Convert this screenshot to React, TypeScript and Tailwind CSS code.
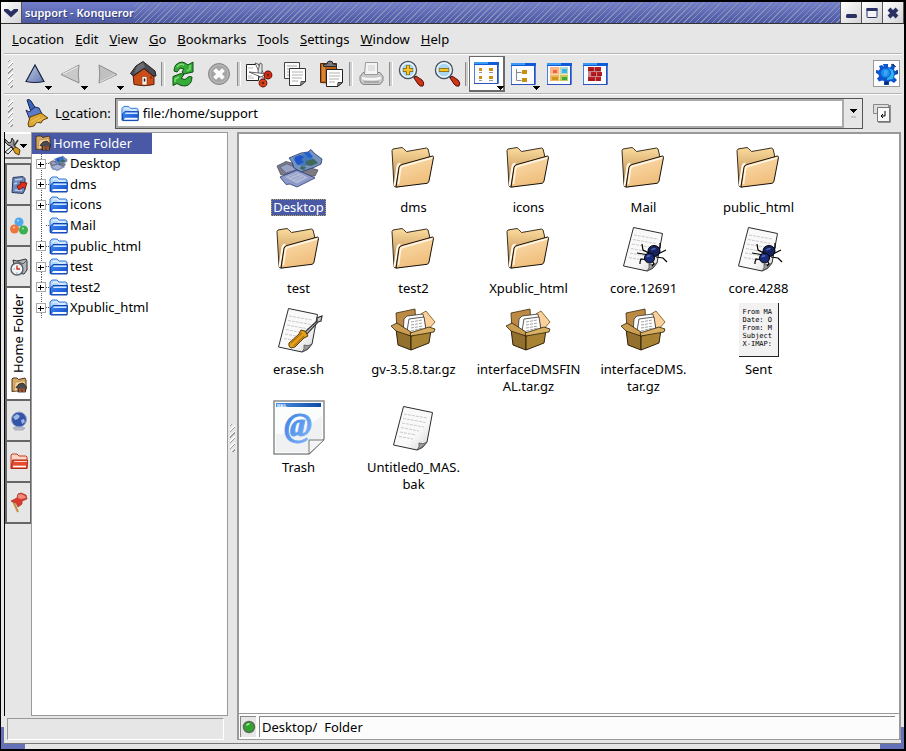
import { ReactNode, useState } from 'react';

interface iconProps {
    className?: string;
}

interface fileProps {
    icon: ReactNode;
    lines: string[];
    selected?: boolean;
    onSelect: () => void;
}

// ^ ---------------------------- small icons --------------------------------------

function BlueFolder({ className = 'w-[19px] h-[17px]' }: iconProps) {
    return (
        <svg viewBox="0 0 19 17" className={className} aria-hidden="true">
            <defs>
                <linearGradient id="blueFront" x1="0" y1="0" x2="1" y2="1">
                    <stop offset="0" stopColor="#3f8cf4" />
                    <stop offset="1" stopColor="#1349c8" />
                </linearGradient>
            </defs>
            <path d="M1 15.500V3l2-2h5l2 2h6.500l1.500 1v11.500z" fill="#b4d8fc" stroke="#3676d8" />
            <path d="M4 4.500L5 3h3l2 2h6" fill="none" stroke="#f2f9ff" />
            <path d="M1.500 15.500V9L4 6.500h14.500l-.500 9.500H2z" fill="url(#blueFront)" stroke="#1246ae" />
            <path d="M5 7.500h12.500v1.500H4z" fill="#cfe6ff" />
            <path d="M4 13h13.500v2H3z" fill="#f4f9ff" />
        </svg>
    );
}

function HomeFolder() {
    return (
        <svg viewBox="0 0 16 16" className="w-4 h-4 shrink-0" aria-hidden="true">
            <path d="M1 14.500V2l1-1h4l1.500 1.500L14 1l1 2v10z" fill="#d9a966" stroke="#4a3318" />
            <path d="M3 14L4 5l10-1.500v9z" fill="#f2cf95" stroke="#b58a4c" strokeWidth=".8" />
            <path d="M5 10.500L8 7l4-1 3.500 4v1l-1 .500v3.500H7v-4z" fill="#4b4b50" stroke="#222" strokeWidth=".8" />
            <path d="M8 11.500h6V15H8z" fill="#b5511f" />
            <path d="M10 12.500h2V15h-2z" fill="#4b4b50" />
        </svg>
    );
}

function DesktopShapes() {
    return (
        <>
            <path d="M2 20l9-4.500L43 24l-3 6-13 1-14-3-7 1z" fill="#7e7c82" stroke="#4a4e62" strokeWidth=".8" />
            <path d="M5 21l7-3 12 5-13 4z" fill="#97a3c4" stroke="#5b648c" strokeWidth=".8" />
            <path d="M5 31l17-7 5 2 13 6-18 9-7-3-4 .500z" fill="#8c9bc9" stroke="#303b6d" strokeWidth=".8" />
            <path d="M10 31l12-5 11 5.500-11 6z" fill="#b2bad6" />
            <path d="M14 31l9-3.500M17 33l9-3.500M20 34.500l9-3.500" stroke="#8d98c2" strokeWidth=".8" />
            <path d="M14 12l12-5 7-1 3-2.500 3 3.500 8 6-1 5-6 3-14 5-7-4-2-6z" fill="#7593bf" stroke="#27376b" strokeWidth=".8" />
            <path d="M18 12l13-5 5 2 3 6-9 5-8-1z" fill="#4478b8" />
            <path d="M20 11l5-2 4 2-3 3 3 2-6 3-3-4z" fill="#1f55cc" />
            <path d="M31 15l8-2 4 4-7 3-5-1zM26 20l5 1-2 3-4-1z" fill="#41675c" />
            <path d="M29 7l5-1 4 5-4 1z" fill="#1f5fd0" />
        </>
    );
}

function Caret({ className = '' }: iconProps) {
    return (
        <svg viewBox="0 0 7 4" className={`w-[7px] h-1 ${className}`} shapeRendering="crispEdges" aria-hidden="true">
            <path d="M0 0h2v0h3v0h2v1h-1v1h-1v1h-1v1h-1v-1h-1v-1h-1v-1h-1z" fill="#000" />
        </svg>
    );
}

// ^ ---------------------------- toolbar icons --------------------------------------

const UpIcon = () => (
    <svg viewBox="0 0 32 32" className="w-8 h-8" aria-hidden="true">
        <defs>
            <linearGradient id="up" x1="0" y1="0" x2="1" y2="1">
                <stop offset="0" stopColor="#c3cee8" />
                <stop offset="1" stopColor="#6076ae" />
            </linearGradient>
        </defs>
        <path d="M16 7L7 23.500q9 2 18 0z" fill="url(#up)" stroke="#15203c" strokeWidth="1.200" />
    </svg>
);

const BackIcon = () => (
    <svg viewBox="0 0 32 32" className="w-8 h-8" aria-hidden="true">
        <path d="M6 16.500L24 7q-1.500 9 0 18z" fill="#c9c9c9" stroke="#8d8d8d" />
        <path d="M8 16l15-7.500" stroke="#efefef" />
    </svg>
);

const ForwardIcon = () => (
    <svg viewBox="0 0 32 32" className="w-8 h-8" aria-hidden="true">
        <path d="M26 16.500L8 7q1.500 9 0 18z" fill="#c0c0c0" stroke="#8d8d8d" />
        <path d="M9 24l15-7.500" stroke="#dedede" />
    </svg>
);

const HomeIcon = () => (
    <svg viewBox="0 0 32 32" className="w-8 h-8" aria-hidden="true">
        <path d="M6 16L17 8l10 7v11.500q-10 2.500-20 0z" fill="#cb4c17" stroke="#5a1e08" />
        <path d="M3.500 15.500L9 8l7-4.500L28 13l1 5h-3l-9-7.500L6.500 18z" fill="#4a4a4f" stroke="#1c1c20" />
        <path d="M10 8l6-3.500 2 4.500L7 16z" fill="#6c6c72" />
        <path d="M15 18.500h5V27h-5z" fill="#f6f1e8" stroke="#8a3a16" strokeWidth=".6" />
        <path d="M17.500 20.500v3" stroke="#111" strokeWidth="1.400" />
        <path d="M23 18.500h2v2h-2z" fill="#8d2c08" />
    </svg>
);

const ReloadIcon = () => (
    <svg viewBox="0 0 32 32" className="w-8 h-8" aria-hidden="true">
        <path d="M7 13q0-8 8-9l3 1 3 2 5-3v10l-9 2-2-2 2-3-4-1-3 4z" fill="#35ac36" stroke="#0d4d14" />
        <path d="M25 19q0 8-7 9l-4-.500-4-2-4 2v-9l8-3 3 1-3 4 4 1 4-3z" fill="#35ac36" stroke="#0d4d14" />
        <path d="M10 9q3-4 7-2M23 7v4l-3 2M8 24v-3l4-2" fill="none" stroke="#7fdc74" strokeWidth="1.500" />
    </svg>
);

const StopIcon = () => (
    <svg viewBox="0 0 32 32" className="w-8 h-8" aria-hidden="true">
        <circle cx="16" cy="16" r="10.500" fill="#a6a6a6" stroke="#868686" />
        <circle cx="16" cy="16" r="9" fill="none" stroke="#bcbcbc" />
        <path d="M13 13l6 6M19 13l-6 6" stroke="#fafafa" strokeWidth="4" strokeLinecap="square" />
    </svg>
);

const CutIcon = () => (
    <svg viewBox="0 0 32 32" className="w-8 h-8" aria-hidden="true">
        <path d="M3.500 6.500h12v16h-12z" fill="#fff" stroke="#222" />
        <path d="M5 10h5M5 18h4M5 20h6" stroke="#bbb" />
        <path d="M12 5l3 1 6 10 1 5-4-3z" fill="#f4f4f4" stroke="#444" strokeWidth=".8" />
        <path d="M17 5l2 1v8l-3 6-1-7z" fill="#e4e4e4" stroke="#444" strokeWidth=".8" />
        <path d="M6 14l10 1 7 1-5 3z" fill="#fff" stroke="#444" strokeWidth=".8" />
        <circle cx="25" cy="17" r="2.400" fill="#e6e6e6" stroke="#5c0c05" strokeWidth="4" />
        <circle cx="25" cy="17" r="2.400" fill="none" stroke="#d22c12" strokeWidth="2.400" />
        <circle cx="20" cy="25" r="2.400" fill="#e6b020" stroke="#5c0c05" strokeWidth="4" />
        <circle cx="20" cy="25" r="2.400" fill="none" stroke="#d8401a" strokeWidth="2.400" />
    </svg>
);

const CopyIcon = () => (
    <svg viewBox="0 0 32 32" className="w-8 h-8" aria-hidden="true">
        <path d="M5.500 4.500h15v16h-15z" fill="#fafafa" stroke="#444" />
        <path d="M8 8h10M8 11h10M8 14h4M8 17h4" stroke="#a4a4a4" />
        <path d="M10.500 10.500h16v13l-5 4h-11z" fill="#fff" stroke="#333" />
        <path d="M13 14h11M13 17h11M13 20h10M13 23h6" stroke="#b0b0b0" />
        <path d="M26.500 23.500l-5 4 .500-4z" fill="#999" stroke="#333" strokeWidth=".8" />
    </svg>
);

const PasteIcon = () => (
    <svg viewBox="0 0 32 32" className="w-8 h-8" aria-hidden="true">
        <path d="M5.500 5.500h16v20l-16-1z" fill="#b9601a" stroke="#542505" />
        <path d="M7 7h3v16H7z" fill="#d98536" />
        <path d="M8.500 8.500V6.500L12 6q0-3 3-3t3 3l3.500.500v2z" fill="#77777b" stroke="#29292c" />
        <path d="M11.500 11.500h16v13l-5 4h-11z" fill="#fff" stroke="#222" />
        <path d="M14 15h11M14 18h11M14 21h10M14 24h6" stroke="#b0b0b0" />
        <path d="M27.500 24.500l-5 4 .500-4z" fill="#888" stroke="#222" strokeWidth=".8" />
    </svg>
);

const PrintIcon = () => (
    <svg viewBox="0 0 32 32" className="w-8 h-8" aria-hidden="true">
        <path d="M8 14.500h17l3 4v4q-2 4-4 4H9q-3 0-4-4v-4z" fill="#c9c9c9" stroke="#858585" />
        <path d="M10.500 4.500h12v12h-13z" fill="#f4f4f4" stroke="#9a9a9a" />
        <path d="M13 7h7v6h-7z" fill="#e2e2e2" />
        <path d="M7 20q9 2.500 19 0" fill="none" stroke="#f6f6f6" strokeWidth="2.500" />
        <path d="M9 24h15" stroke="#9c9c9c" strokeWidth="1.500" />
    </svg>
);

const ZoomShapes = ({ plus }: { plus?: boolean }) => (
    <svg viewBox="0 0 32 32" className="w-8 h-8" aria-hidden="true">
        <path d="M18 18l4 3" stroke="#555" strokeWidth="2.500" />
        <path d="M19 20l2-2 6 4q3 3 1 6-3 1-5-2z" fill="#cf3318" stroke="#531006" />
        <circle cx="13" cy="12" r="8.500" fill="#a9d6f2" stroke="#46525e" strokeWidth="1.500" />
        <circle cx="13" cy="12" r="7" fill="none" stroke="#eef5fa" strokeWidth="1.400" />
        <path d="M8 12h10" stroke="#866407" strokeWidth="4" />
        {plus && <path d="M13 7v10" stroke="#866407" strokeWidth="4" />}
        <path d="M8.500 12h9" stroke="#f7c32c" strokeWidth="2.400" />
        {plus && <path d="M13 7.500v9" stroke="#f7c32c" strokeWidth="2.400" />}
    </svg>
);

const WindowView = ({ children }: { children: ReactNode }) => (
    <svg viewBox="0 0 25 22" className="w-[25px] h-[22px]" aria-hidden="true">
        <path d="M.5 .5h24v21H.5z" fill="#fafcff" stroke="#4a80dc" />
        <path d="M0 0h25v3H0z" fill="#0f5bd8" />
        <path d="M0 0h14v2H0z" fill="#3b9af4" />
        <path d="M24 3v19H0v-1h23V3z" fill="#2c52b8" />
        {children}
    </svg>
);

const IconsView = () => (
    <WindowView>
        <path d="M5 6h3v3H5zM15 6h4v3h-4zM5 14h3v3H5zM15 14h4v3h-4z" fill="#c98f14" />
        <path d="M5 10.500h3M15 10.500h4M5 18.500h3M15 18.500h4" stroke="#999" />
    </WindowView>
);

const TreeView = () => (
    <WindowView>
        <path d="M5.500 6v11.500h5M5.500 9.500h5" stroke="#888" fill="none" />
        <path d="M11 7h5v4h-5zM11 15h5v4h-5z" fill="#c98f14" />
    </WindowView>
);

const ColorView = () => (
    <WindowView>
        <path d="M3 4h9v7H3z" fill="#f6b48c" />
        <path d="M6 7h4v3H6z" fill="#f4603a" />
        <path d="M13 4h8v7h-8z" fill="#b4d8c8" />
        <path d="M15 6h5v4h-5z" fill="#38b4f0" />
        <path d="M3 12h9v6H3z" fill="#f0b464" />
        <path d="M5 14h6v3H5z" fill="#cc9a1a" />
        <path d="M13 12h8v6h-8z" fill="#c0cc60" />
        <path d="M15 14h5v3h-5z" fill="#3caa34" />
        <path d="M12.500 4v14M3 11.500h18" stroke="#fae0a8" />
    </WindowView>
);

const BrickView = () => (
    <WindowView>
        <path d="M5 4h13v14H5z" fill="#c4868a" />
        <path d="M5 4h6v4H5zM12 4h6v4h-6zM8 9h5v4H8zM14 9h5v4h-5zM5 14h7v4H5zM13 14h5v4h-5z" fill="#bc1c20" />
        <path d="M6 7h4M13 7h4M9 12h4M15 12h3M6 17h5M14 17h3" stroke="#84141a" />
    </WindowView>
);

const GearIcon = () => (
    <svg viewBox="0 0 24 24" className="w-6 h-6" aria-hidden="true">
        <path d="M8 2h5v3l2 .500 2-2.500 3 1-1 4 1 1 3-1v4l-3 1-1 2 3 3-3 3-3-2-2 1v3H9v-4l-2-.500-3 1-2-3 2-2-.500-2L1 11V8l3 .500 1-2L4 4l3-1 2 2z" fill="#0d55cf" />
        <path d="M13 6l5 2 1 4-1 5-6 1z" fill="#2eb6f2" />
        <circle cx="10.500" cy="11" r="5" fill="#1d8df0" stroke="#0f58c8" />
        <path d="M9 8l4 1-1 4-3 1z" fill="#3fa6f6" />
        <path d="M16 3l2-1 3 3M22 8v4M10 20h3v2h-3z" stroke="#072a66" fill="#072a66" strokeWidth=".8" />
    </svg>
);

const BroomIcon = () => (
    <svg viewBox="0 0 24 30" className="w-6 h-[30px]" aria-hidden="true">
        <path d="M2 2q2-1.500 4 1l5 8-5 3z" fill="#3b64c0" stroke="#14234e" />
        <path d="M1 12l3 2 6-5 4 1 3 6-12 6z" fill="#5a7cc8" stroke="#1a2a5a" />
        <path d="M5 19l11-4 7 5-5 2-2 3-4-1-3 4-5 1-1-3z" fill="#dca632" stroke="#5d410c" />
        <path d="M6 24l9-5M9 25l10-5" stroke="#f0c860" />
    </svg>
);

// ^ ---------------------------- sidebar icons --------------------------------------

const ToolsIcon = () => (
    <svg viewBox="0 0 20 20" className="w-5 h-5" aria-hidden="true">
        <path d="M0 3l4 4 2-1 1-4 2 3v4l5 6-2 2-6-7-3-1-3-3z" fill="#999" stroke="#222" />
        <path d="M0 16l6-5 2 2-5 5z" fill="#e8e8e8" stroke="#222" />
        <path d="M8 13l3-2 4 3-1 5-4-2z" fill="#d89c1c" stroke="#5d410c" />
        <path d="M9 10l4-6" stroke="#333" strokeWidth="1.500" />
    </svg>
);

const BookmarkIcon = () => (
    <svg viewBox="0 0 18 18" className="w-[18px] h-[18px]" aria-hidden="true">
        <path d="M3 1.500l10-1 2 2v11l-2 4-11-1z" fill="#6c88ba" stroke="#26375e" />
        <path d="M5 4l7-1M4 8l3-1M5 14l7 .500" stroke="#b9cbe8" strokeWidth="1.500" />
        <path d="M7 10l4-2-1-2 7 1-2 6-2-2-4 3z" fill="#e0301c" stroke="#6c0f08" strokeWidth=".8" />
    </svg>
);

const BallsIcon = () => (
    <svg viewBox="0 0 18 18" className="w-[18px] h-[18px]" aria-hidden="true">
        <circle cx="9" cy="5" r="4.500" fill="#4ea8ee" />
        <circle cx="4.500" cy="12" r="4.500" fill="#ee7440" />
        <circle cx="13.500" cy="13" r="4.500" fill="#38b050" />
        <path d="M7 3.500h2M3 10.500h2M12 11.500h2" stroke="#fff" strokeWidth="1.500" opacity=".6" />
    </svg>
);

const ClockIcon = () => (
    <svg viewBox="0 0 18 18" className="w-[18px] h-[18px]" aria-hidden="true">
        <path d="M3 2l4 1 9-2 1 2v9l-3 4-8-1z" fill="#b0b6ba" stroke="#333" />
        <path d="M7 3l6 3 4-4" fill="none" stroke="#555" />
        <circle cx="7" cy="11" r="6" fill="#f2f4f6" stroke="#565c62" strokeWidth="1.400" />
        <path d="M7 7.500V11h3" fill="none" stroke="#d0321c" strokeWidth="1.400" />
        <path d="M3.500 11h1M7 14.500v1" stroke="#3e6fc0" />
    </svg>
);

const GlobeIcon = () => (
    <svg viewBox="0 0 18 20" className="w-[18px] h-5" aria-hidden="true">
        <path d="M3 17q6-3 12 0l-2 2H5z" fill="#b8bfcc" stroke="#9ca3b0" strokeWidth=".8" />
        <circle cx="9" cy="8.500" r="7.500" fill="#3454a8" stroke="#9aa6c2" />
        <path d="M3 6l4-3 3 2-2 3-3 1zM11 9l3-1 1 3-3 2zM11 3l3 2" fill="#9fb8e4" />
    </svg>
);

const RedFolder = () => (
    <svg viewBox="0 0 18 17" className="w-[18px] h-[17px]" aria-hidden="true">
        <path d="M1 15.500V2l1-1h5l2 2h7l1 1v11.500z" fill="#fad4c4" stroke="#c83c20" />
        <path d="M1 15.500L2.500 7h15l-.500 8.500z" fill="#e84a2c" stroke="#b0281a" />
        <path d="M4 8.500h13" stroke="#fbd8cc" />
        <path d="M3 13.500h13" stroke="#fff" strokeWidth="1.600" />
    </svg>
);

const FlagIcon = () => (
    <svg viewBox="0 0 18 22" className="w-[18px] h-[22px]" aria-hidden="true">
        <path d="M3 9l5 11" stroke="#c2903a" strokeWidth="2" />
        <path d="M8 2l3-1 5 2 1 4-5 2v3l-4 3-2-4-5-2 4-2 2-1z" fill="#dc382c" stroke="#a8382c" strokeWidth=".8" />
        <path d="M8 3l3-1 4 2 1 2-5 1-3-1z" fill="#ee8c80" />
    </svg>
);

// ^ ---------------------------- big file icons --------------------------------------

const DesktopIcon = () => (
    <svg viewBox="0 0 48 46" className="w-12 h-[46px]" aria-hidden="true">
        <DesktopShapes />
    </svg>
);

const FolderIcon = () => (
    <svg viewBox="2 1 48 48" className="w-12 h-12" aria-hidden="true">
        <defs>
            <linearGradient id="fback" x1="0" y1="0" x2="0" y2="1">
                <stop offset="0" stopColor="#fbdc9e" />
                <stop offset=".5" stopColor="#d8ac70" />
                <stop offset="1" stopColor="#8b6a43" />
            </linearGradient>
            <linearGradient id="ffront" x1="0" y1="0" x2=".4" y2="1">
                <stop offset="0" stopColor="#fddfb0" />
                <stop offset="1" stopColor="#efbe7c" />
            </linearGradient>
        </defs>
        <path d="M4 6.500l1-1.500 9-1.500 1.500 1 3 3 20-3.500 1.500 1 1.500 6-3 27-31 5-1.500-1z" fill="url(#fback)" stroke="#3a2f20" />
        <path d="M6.500 42l3-20q.500-2 3-2.500" fill="none" stroke="#fff8ec" strokeWidth="2" />
        <path d="M8 43l3-19.500q.500-2.500 3-3l30.500-8.500q1 0 1 1.500L41 37q-.500 2-2 2.300L9 43z" fill="url(#ffront)" stroke="#17110a" />
        <path d="M10.500 40l2-15q.500-2.300 2.500-2.800L44 14" fill="none" stroke="#fff8ec" strokeWidth="1.500" />
    </svg>
);

const Sheet = ({ children }: { children?: ReactNode }) => (
    <svg viewBox="0 2 48 48" className="w-12 h-12 overflow-visible" aria-hidden="true">
        <defs>
            <linearGradient id="sheet" x1="0" y1="0" x2="1" y2="1">
                <stop offset=".6" stopColor="#f9f9f9" />
                <stop offset="1" stopColor="#d2d2d2" />
            </linearGradient>
        </defs>
        <path d="M13.500 3.500l29 6L37 39q-4 7-10 8L3.500 42z" fill="url(#sheet)" stroke="#2c2c2c" />
        <path d="M14 11l23 4M13 15.500l23 4M12 20l22 4M11 24.500l18 3.500M10 29l16 3M9 33.500l14 2.500" stroke="#cacaca" strokeDasharray="3 1" />
        <path d="M27 47q3-3 2-7 4 2 8-1-4 6-10 8z" fill="#9a9a9a" stroke="#444" strokeWidth=".7" />
        {children}
    </svg>
);

const CoreIcon = () => (
    <Sheet>
        <path d="M29 31l-12-2M28 36l-7-1-1 3v2M31 30l-8-4-1-6M38 25l2-1v-5M38 30l4-2 4-2M36 33l7 1 4 4M32 36l2 4-2 2" fill="none" stroke="#000" strokeWidth="1.200" />
        <ellipse cx="34" cy="27" rx="6" ry="5.500" fill="#16235e" stroke="#000" />
        <circle cx="29.500" cy="34" r="5" fill="#1a2b78" stroke="#000" />
        <path d="M31.500 26q2-2 4-1M27 33q1-1.500 3-1" fill="none" stroke="#5068c0" strokeWidth="1.500" />
    </Sheet>
);

const ScriptIcon = () => (
    <Sheet>
        <path d="M30 27l12-11v-3l5-2-1 5-3 1-11 12z" fill="#c8c8c8" stroke="#333" strokeWidth="1.200" />
        <path d="M14 38l10-9 2-4 4 1 3 5-4 2-9 9-4 1q-3-1-2-5z" fill="#e2a01c" stroke="#5a3a06" />
        <path d="M16 38l11-10M19 41l10-10" stroke="#b8780f" strokeWidth="1.500" />
    </Sheet>
);

const ArchiveIcon = () => (
    <svg viewBox="0 0 48 48" className="w-12 h-12" aria-hidden="true">
        <path d="M6 6l19-4 1 16-19 5z" fill="#bd8a45" stroke="#3c290d" strokeWidth=".8" />
        <path d="M31 7l5-3 9 11-8 9z" fill="#fbd09a" stroke="#6e4c18" strokeWidth=".8" />
        <path d="M14 12l3-3 16-2 3 17-16 5-7-3z" fill="#fdfdfd" stroke="#333" strokeWidth=".8" />
        <path d="M19 12l15-2 2 13-16 5-3-4z" fill="#fff" stroke="#333" strokeWidth=".8" />
        <path d="M21 15l11-2M21 18l12-2M21 21l12-2M21 24l12-3" stroke="#a0a0a0" strokeDasharray="3 1" />
        <path d="M6 22l15 7v14L8 38z" fill="#94702e" stroke="#2e210a" />
        <path d="M21 29l20-6-2 13-18 7z" fill="#a98334" stroke="#2e210a" />
        <path d="M1 19l6-3 14 9v4L6 24z" fill="#c99d52" stroke="#2e210a" strokeWidth=".8" />
        <path d="M21 29l-1-3 19-6 6 2-1 3z" fill="#d8b064" stroke="#2e210a" strokeWidth=".8" />
    </svg>
);

const TrashIcon = () => (
    <svg viewBox="0 0 52 55" className="w-[52px] h-[55px] mb-1" aria-hidden="true">
        <defs>
            <linearGradient id="mail" x1="0" y1="0" x2="1" y2="0">
                <stop offset="0" stopColor="#4a90e4" />
                <stop offset="1" stopColor="#0d4aa6" />
            </linearGradient>
            <linearGradient id="at" x1="0" y1="0" x2="1" y2="1">
                <stop offset="0" stopColor="#2f7ce0" />
                <stop offset="1" stopColor="#86b4fa" />
            </linearGradient>
        </defs>
        <path d="M1 1h50v38L36 54H1z" fill="#fbfcfc" stroke="#8c8c8c" strokeWidth="1.500" />
        <path d="M3 34q24 0 46-18v22L36 52H3z" fill="#f0f1f2" />
        <path d="M3 3h45v4H3z" fill="url(#mail)" />
        <text x="4" y="7" fontSize="4" fontWeight="700" fill="#fff" fontFamily="Liberation Sans, sans-serif">MAIL</text>
        <text x="25" y="36" textAnchor="middle" fontSize="33" fontWeight="700" fontStyle="italic" fill="url(#at)" stroke="url(#at)" fontFamily="Liberation Serif, serif">@</text>
        <path d="M36 54V40h15z" fill="#f4f4f4" stroke="#777" />
    </svg>
);

function SentIcon() {
    return (
        <pre className="w-10 h-[54px] mb-[2px] pt-[5px] pl-1 text-left bg-[#f2f2f2] border-r border-b border-[#222] font-['DejaVu_Sans_Mono',monospace] text-[7px] leading-[8px] text-black overflow-hidden">
            {'From MA\nDate: O\nFrom: M\nSubject\nX-IMAP:'}
        </pre>
    );
}

// ^ -------------------------------------------------------------------------------------

function Grip() {
    return (
        <div className="w-[5px] h-7 shrink-0 bg-[repeating-linear-gradient(135deg,#fff_0_1px,#9a9a9a_1px_2px,#e6e6e6_2px_4px)]" />
    );
}

function Separator() {
    return <div className="w-1 h-6 shrink-0 border-x border-l-[#8c8c8c] border-r-white bg-[#cfcfcf]" />;
}

function ToolButton({ label, children, menu, pressed }: { label: string; children: ReactNode; menu?: boolean; pressed?: boolean }) {
    return (
        <button
            type="button"
            aria-label={label}
            className={`relative w-9 h-9 shrink-0 flex items-center justify-center ${pressed ? 'bg-white border-2 border-[#6a6a6a] border-t border-l' : ''}`}
        >
            {children}
            {menu && <Caret className={`absolute ${pressed ? '-right-px bottom-0' : 'right-px bottom-[2px]'}`} />}
        </button>
    );
}

function SideTab({ label, children, active }: { label: string; children: ReactNode; active?: boolean }) {
    return (
        <button
            type="button"
            aria-label={label}
            className={`w-full flex flex-col items-center justify-center border-l-2 border-b-2 border-r border-[#666] ${active ? 'bg-white h-[113px] gap-1' : 'bg-[#e6e6e6] h-[41px]'}`}
        >
            {children}
        </button>
    );
}

function TreeRow({ label, expandable = true, icon }: { label: string; expandable?: boolean; icon?: ReactNode }) {
    return (
        <li className="flex items-center pl-1">
            <span className="w-[10px] h-full flex items-center justify-center bg-[repeating-linear-gradient(#555_0_1px,#fff_1px_2px)] bg-[length:1px_100%] bg-center bg-no-repeat">
                {expandable && (
                    <svg viewBox="0 0 10 10" className="w-[10px] h-[10px]" shapeRendering="crispEdges" aria-hidden="true">
                        <path d="M0 0h10v10H0z" fill="#aaa" />
                        <path d="M1 1h8v8H1z" fill="#fff" />
                        <path d="M2 5h6v1H2zM4 3h1v5H4z" fill="#000" />
                    </svg>
                )}
            </span>
            <span className="w-[3px] border-t border-dotted border-[#555]" />
            {icon ?? <BlueFolder />}
            <span className="ml-[2px]">{label}</span>
        </li>
    );
}

function FileItem({ icon, lines, selected, onSelect }: fileProps) {
    return (
        <button type="button" className="flex flex-col items-center pb-1" onClick={onSelect}>
            <span className="h-[60px] flex items-center justify-center">{icon}</span>
            <span
                className={`leading-[17px] ${selected ? 'bg-[#4a59a5] text-white px-[2px] outline-dotted outline-1 -outline-offset-1 outline-[#b5a65a]' : ''}`}
            >
                {lines.map((line) => (
                    <span key={line} className="block">
                        {line}
                    </span>
                ))}
            </span>
        </button>
    );
}

const menus = ['Location', 'Edit', 'View', 'Go', 'Bookmarks', 'Tools', 'Settings', 'Window', 'Help'];

const files = [
    { lines: ['Desktop'], icon: <DesktopIcon /> },
    { lines: ['dms'], icon: <FolderIcon /> },
    { lines: ['icons'], icon: <FolderIcon /> },
    { lines: ['Mail'], icon: <FolderIcon /> },
    { lines: ['public_html'], icon: <FolderIcon /> },
    { lines: ['test'], icon: <FolderIcon /> },
    { lines: ['test2'], icon: <FolderIcon /> },
    { lines: ['Xpublic_html'], icon: <FolderIcon /> },
    { lines: ['core.12691'], icon: <CoreIcon /> },
    { lines: ['core.4288'], icon: <CoreIcon /> },
    { lines: ['erase.sh'], icon: <ScriptIcon /> },
    { lines: ['gv-3.5.8.tar.gz'], icon: <ArchiveIcon /> },
    { lines: ['interfaceDMSFIN', 'AL.tar.gz'], icon: <ArchiveIcon /> },
    { lines: ['interfaceDMS.', 'tar.gz'], icon: <ArchiveIcon /> },
    { lines: ['Sent'], icon: <SentIcon /> },
    { lines: ['Trash'], icon: <TrashIcon /> },
    { lines: ['Untitled0_MAS.', 'bak'], icon: <Sheet /> },
];

const titleButton = 'w-[21px] h-[21px] flex items-center justify-center bg-linear-to-br from-white to-[#d4d4d8] border-r border-[#555]';

function TitleBar() {
    return (
        <header className="h-[22px] shrink-0 flex items-center bg-linear-to-b from-[#747fcb] to-[#4c58a0] border-b border-[#333]">
            <button type="button" aria-label="Window menu" className={titleButton}>
                <svg viewBox="0 0 14 10" className="w-[14px] h-[10px]" aria-hidden="true">
                    <path d="M0 1h4l3 2.500L10 1h4v2L7 9.500 0 3z" fill="#2a3062" />
                </svg>
            </button>
            <h1 className="pl-[3px] text-[11px] font-semibold text-white [text-shadow:1px_1px_0_#343c78]">support - Konqueror</h1>
            <div className="flex-1 self-stretch bg-[repeating-linear-gradient(135deg,transparent_0_3px,#868ebc_3px_4px)]" />
            <div className="flex border-l border-[#555]">
                <button type="button" aria-label="Minimize" className={titleButton}>
                    <svg viewBox="0 0 12 12" className="w-3 h-3" aria-hidden="true">
                        <rect x="1" y="7" width="11" height="4" rx="1.500" fill="#2a3062" />
                    </svg>
                </button>
                <button type="button" aria-label="Maximize" className={titleButton}>
                    <svg viewBox="0 0 12 12" className="w-3 h-3" aria-hidden="true">
                        <rect x="1" y="1.500" width="10" height="9" rx="1" fill="#f4f4f6" stroke="#2a3062" />
                        <path d="M.5 1h11v3H.5z" fill="#2a3062" />
                    </svg>
                </button>
                <button type="button" aria-label="Close" className={titleButton}>
                    <svg viewBox="0 0 12 12" className="w-3 h-3" aria-hidden="true">
                        <path d="M2 2l8 8M10 2l-8 8" stroke="#2a3062" strokeWidth="4" />
                    </svg>
                </button>
            </div>
        </header>
    );
}

function Toolbar() {
    return (
        <div className="h-10 shrink-0 flex items-center pl-1 pr-[2px] border-t border-[#b4b4b4] shadow-[inset_0_1px_0_#fff]">
            <Grip />
            <div className="w-1 shrink-0" />
            <ToolButton label="Up" menu><UpIcon /></ToolButton>
            <ToolButton label="Back" menu><BackIcon /></ToolButton>
            <ToolButton label="Forward" menu><ForwardIcon /></ToolButton>
            <ToolButton label="Home"><HomeIcon /></ToolButton>
            <Separator />
            <ToolButton label="Reload"><ReloadIcon /></ToolButton>
            <ToolButton label="Stop"><StopIcon /></ToolButton>
            <Separator />
            <ToolButton label="Cut"><CutIcon /></ToolButton>
            <ToolButton label="Copy"><CopyIcon /></ToolButton>
            <ToolButton label="Paste"><PasteIcon /></ToolButton>
            <Separator />
            <ToolButton label="Print"><PrintIcon /></ToolButton>
            <Separator />
            <ToolButton label="Zoom in"><ZoomShapes plus /></ToolButton>
            <ToolButton label="Zoom out"><ZoomShapes /></ToolButton>
            <Separator />
            <ToolButton label="Icon view" menu pressed><IconsView /></ToolButton>
            <ToolButton label="Tree view" menu><TreeView /></ToolButton>
            <ToolButton label="Image view"><ColorView /></ToolButton>
            <ToolButton label="File size view"><BrickView /></ToolButton>
            <div className="ml-auto w-[27px] h-[27px] shrink-0 flex items-center justify-center bg-white border border-[#999]">
                <GearIcon />
            </div>
        </div>
    );
}

function LocationBar() {
    const [url, setUrl] = useState('file:/home/support');

    return (
        <div className="h-[39px] shrink-0 flex items-center pl-1 pr-[11px] border-t border-[#b4b4b4] shadow-[inset_0_1px_0_#fff]">
            <Grip />
            <button type="button" aria-label="Clear location bar" className="ml-3 mr-[6px]">
                <BroomIcon />
            </button>
            <label htmlFor="location" className="mr-1">
                L<span className="underline">o</span>cation:
            </label>
            <div className="flex-1 min-w-0 h-[31px] flex border border-[#555] bg-[#e6e6e6]">
                <div className="flex-1 min-w-0 flex items-center bg-white border-2 border-[#aaa] pl-[3px]">
                    <BlueFolder className="w-[18px] h-[17px]" />
                    <input
                        id="location"
                        value={url}
                        onChange={(e) => setUrl(e.target.value)}
                        className="flex-1 min-w-0 pl-1 outline-none bg-transparent"
                    />
                </div>
                <button type="button" aria-label="Show history" className="w-[18px] flex flex-col gap-[3px] items-center justify-center">
                    <Caret />
                    <span className="w-[5px] h-[2px] bg-[#c4c4c4]" />
                </button>
            </div>
            <button type="button" aria-label="Go" className="ml-[10px]">
                <svg viewBox="0 0 18 20" className="w-[18px] h-5" aria-hidden="true">
                    <path d="M.5 1.500h15v9H.5z" fill="#ddd" stroke="#888" />
                    <path d="M4.500 4.500h12v14h-12z" fill="#f8f8f8" stroke="#777" />
                    <path d="M17 2v17H5" fill="none" stroke="#777" strokeWidth="1.500" />
                    <path d="M12 8v5H8M10 11l-2 2 2 2" fill="none" stroke="#000" />
                </svg>
            </button>
        </div>
    );
}

function Sidebar() {
    return (
        <aside className="w-56 shrink-0 flex flex-col">
            <div className="flex-1 flex">
                <nav className="w-[27px] shrink-0 flex flex-col border-l border-black">
                    <button type="button" aria-label="Configure panel" className="relative h-[27px] mb-1 flex items-center bg-[#e6e6e6] border-y-2 border-t-white border-b-[#777]">
                        <ToolsIcon />
                        <Caret className="absolute right-1 top-[10px]" />
                    </button>
                    <div className="border-t-2 border-[#666]">
                        <SideTab label="Bookmarks"><BookmarkIcon /></SideTab>
                        <SideTab label="Devices"><BallsIcon /></SideTab>
                        <SideTab label="History"><ClockIcon /></SideTab>
                        <SideTab label="Home Folder" active>
                            <span className="[writing-mode:vertical-rl] rotate-180">Home Folder</span>
                            <HomeFolder />
                        </SideTab>
                        <SideTab label="Network"><GlobeIcon /></SideTab>
                        <SideTab label="Root Folder"><RedFolder /></SideTab>
                        <SideTab label="Services"><FlagIcon /></SideTab>
                    </div>
                </nav>
                <div className="flex-1 bg-white border border-[#999]">
                    <ul className="h-[185px] grid grid-rows-9">
                        <li className="w-[120px] flex items-center gap-[2px] pl-[3px] bg-[#4a59a5] text-white">
                            <HomeFolder />
                            Home Folder
                        </li>
                        <TreeRow
                            label="Desktop"
                            icon={
                                <svg viewBox="1 2 48 42" className="w-[19px] h-[17px]" aria-hidden="true">
                                    <DesktopShapes />
                                </svg>
                            }
                        />
                        <TreeRow label="dms" />
                        <TreeRow label="icons" />
                        <TreeRow label="Mail" expandable={false} />
                        <TreeRow label="public_html" />
                        <TreeRow label="test" />
                        <TreeRow label="test2" />
                        <TreeRow label="Xpublic_html" />
                    </ul>
                </div>
            </div>
            <div className="h-[22px] mt-[2px] mb-[3px] ml-[3px] mr-1 border border-[#999] border-r-white border-b-white" />
        </aside>
    );
}

function App() {
    const [selected, setSelected] = useState(0);

    return (
        <div className="relative min-h-screen flex flex-col bg-[#e6e6e6] border-2 border-black border-l font-['Noto_Sans',sans-serif] text-[13px] leading-[17px] text-black">
            <TitleBar />
            <div className="flex-1 flex flex-col pl-[3px] pr-[2px]">
                <nav className="h-[29px] shrink-0 flex items-center gap-[11px] pt-[2px] pl-2">
                    {menus.map((menu) => (
                        <button key={menu} type="button">
                            <span className="underline">{menu[0]}</span>
                            {menu.slice(1)}
                        </button>
                    ))}
                </nav>
                <Toolbar />
                <LocationBar />

                <div className="flex-1 flex">
                    <Sidebar />
                    <div className="w-[9px] shrink-0 flex items-center justify-center">
                        <Grip />
                    </div>
                    <main className="flex-1 min-w-0 flex flex-col border-2 border-[#999] border-b mb-[3px] mr-[1px] bg-white">
                        <div className="flex-1 grid content-start grid-cols-[repeat(auto-fill,115px)] pt-[5px] pl-[2px]">
                            {files.map((file, i) => (
                                <FileItem
                                    key={file.lines[0]}
                                    icon={file.icon}
                                    lines={file.lines}
                                    selected={selected === i}
                                    onSelect={() => setSelected(i)}
                                />
                            ))}
                        </div>
                        <footer className="h-[26px] shrink-0 flex gap-[3px] pt-[2px] pb-[2px] pl-px pr-1 border-t border-[#999] bg-[#fcfcfc]">
                            <div className="w-4 flex items-center justify-center border-t border-l border-[#888] bg-[#e6e6e6]">
                                <svg viewBox="0 0 14 14" className="w-[14px] h-[14px]" aria-hidden="true">
                                    <circle cx="7" cy="7" r="5.500" fill="#2fa52c" stroke="#5c6b5c" strokeWidth="1.500" />
                                    <path d="M4.500 5.500q1-2 3-1.500" fill="none" stroke="#b9f0ae" strokeWidth="1.500" />
                                </svg>
                            </div>
                            <div className="flex-1 flex items-center pl-[2px] border-t border-l border-[#888] whitespace-pre">Desktop/  Folder</div>
                        </footer>
                    </main>
                </div>
            </div>
            <div className="h-[6px] shrink-0 flex justify-between border-t border-[#777] bg-[#e6e6e6]">
                <div className="w-6 bg-[#6470b8]" />
                <div className="w-6 bg-[#6470b8]" />
            </div>
            {/* resize corners */}
            <span className="absolute bottom-0 left-0 w-[3px] h-[22px] bg-[#6470b8]" />
            <span className="absolute bottom-0 right-0 w-[3px] h-[22px] bg-[#6470b8]" />
        </div>
    );
}

export default App;
